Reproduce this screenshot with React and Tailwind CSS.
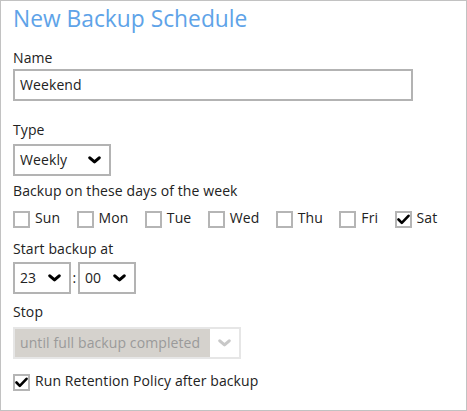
import React from "react";

function Chevron({ color = "#000" }) {
  return (
    <svg width="13" height="8" viewBox="0 0 13 8" className="block">
      <path d="M1.8 1.8 L6.5 5.9 L11.2 1.8" fill="none" stroke={color} strokeWidth="3.1" strokeLinecap="round" strokeLinejoin="round" />
    </svg>
  );
}

function Box({ checked }) {
  return (
    <div className="mt-[3px] w-[17px] h-[17px] border-2 border-[#b5b5b5] bg-white flex items-center justify-center shrink-0">
      {checked && (
        <svg width="13" height="11" viewBox="0 0 13 11">
          <path d="M1.5 5.5 L4.8 8.8 L11.5 1.8" fill="none" stroke="#000" strokeWidth="2.6" strokeLinecap="round" strokeLinejoin="round" />
        </svg>
      )}
    </div>
  );
}

function Day({ label, checked }) {
  return (
    <div className="flex items-start gap-[5px]">
      <Box checked={checked} />
      <span className="leading-[20px]">{label}</span>
    </div>
  );
}

export default function App() {
  const days = ["Sun", "Mon", "Tue", "Wed", "Thu", "Fri", "Sat"];
  return (
    <div
      className="w-[467px] h-[411px] border border-[#c2c2c2] bg-white pl-[12px] text-[14px] tracking-[0.1px] text-[#222]"
      style={{ fontFamily: '"Open Sans", sans-serif' }}
    >
      <div className="mt-[3px] text-[22.8px] tracking-normal leading-[30px] text-[#5ea3e8]">New Backup Schedule</div>

      <div className="mt-[14px] leading-[20px]">Name</div>
      <div className="mt-[1px] w-[400px] h-[32px] border-2 border-[#b3b3b3] flex items-center pl-[5px] leading-[20px]">
        Weekend
      </div>

      <div className="mt-[19px] leading-[20px]">Type</div>
      <div className="mt-[4px] w-[98px] h-[32px] border-2 border-[#b3b3b3] flex items-center pl-[5px] pr-[8px] justify-between leading-[20px]">
        <span>Weekly</span>
        <Chevron />
      </div>

      <div className="mt-[5px] leading-[20px]">Backup on these days of the week</div>
      <div className="mt-[7px] flex gap-x-[16.4px]">
        {days.map((d) => (
          <Day key={d} label={d} checked={d === "Sat"} />
        ))}
      </div>

      <div className="mt-[11px] leading-[20px]">Start backup at</div>
      <div className="mt-[3px] flex items-center">
        <div className="w-[58px] h-[32px] border-2 border-[#b3b3b3] flex items-center justify-between pl-[5px] pr-[8px] leading-[20px]">
          <span>23</span>
          <Chevron />
        </div>
        <span className="w-[7px] text-center leading-[20px]">:</span>
        <div className="w-[58px] h-[32px] border-2 border-[#b3b3b3] flex items-center justify-between pl-[5px] pr-[8px] leading-[20px]">
          <span>00</span>
          <Chevron />
        </div>
      </div>

      <div className="mt-[8px] leading-[20px]">Stop</div>
      <div className="mt-[5px] w-[228px] h-[32px] border-2 border-[#e6e6e6] flex">
        <div className="w-[195px] h-full bg-[#d5d2cd] flex items-center pl-[5px] text-[#9a9a9a] leading-[20px]">
          until full backup completed
        </div>
        <div className="flex-1 flex items-center justify-center">
          <Chevron color="#c8c8c8" />
        </div>
      </div>

      <div className="mt-[12px] flex items-start gap-[5px]">
        <Box checked />
        <span className="leading-[20px]">Run Retention Policy after backup</span>
      </div>
    </div>
  );
}
